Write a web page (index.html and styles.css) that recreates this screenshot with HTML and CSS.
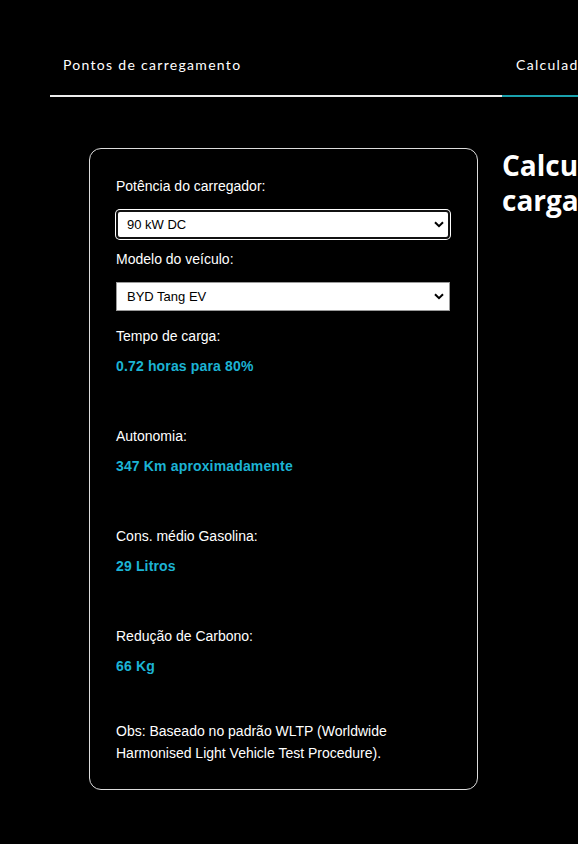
FILE: index.html
```html
<!DOCTYPE html>
<html lang="pt-BR">
<head>
<meta charset="utf-8">
<title>Calculadora de carga</title>
<link rel="stylesheet" href="styles.css">
</head>
<body>
<div class="page">
  <nav class="tabs">
    <a class="tab tab-inactive" href="#">Pontos de carregamento</a>
    <a class="tab tab-active" href="#">Calculadora de carga</a>
  </nav>
  <main class="main">
    <section class="card">
      <label class="label first" for="power">Potência do carregador:</label>
      <div class="select-wrap focused">
        <select id="power" class="select">
          <option>90 kW DC</option>
        </select>
        <svg class="chev" width="10" height="7" viewBox="0 0 10 7"><path d="M1 1.2 L5 5.2 L9 1.2" fill="none" stroke="#000" stroke-width="2"/></svg>
      </div>
      <label class="label" for="model">Modelo do veículo:</label>
      <div class="select-wrap">
        <select id="model" class="select">
          <option>BYD Tang EV</option>
        </select>
        <svg class="chev" width="10" height="7" viewBox="0 0 10 7"><path d="M1 1.2 L5 5.2 L9 1.2" fill="none" stroke="#000" stroke-width="2"/></svg>
      </div>
      <div class="result first-result">
        <div class="label">Tempo de carga:</div>
        <div class="value">0.72 horas para 80%</div>
      </div>
      <div class="result">
        <div class="label">Autonomia:</div>
        <div class="value">347 Km aproximadamente</div>
      </div>
      <div class="result">
        <div class="label">Cons. médio Gasolina:</div>
        <div class="value">29 Litros</div>
      </div>
      <div class="result">
        <div class="label">Redução de Carbono:</div>
        <div class="value">66 Kg</div>
      </div>
      <p class="obs">Obs: Baseado no padrão WLTP (Worldwide Harmonised Light Vehicle Test Procedure).</p>
    </section>
    <h1 class="title">Calculadora de tempo de carga</h1>
  </main>
</div>
</body>
</html>
```

FILE: styles.css
```css
html, body {
  margin: 0;
  padding: 0;
  background: #000;
  overflow-x: hidden;
}
body {
  color: #fff;
  font-family: "Liberation Sans", Arial, sans-serif;
}
.page {
  width: 1000px;
  padding-left: 50px;
  padding-bottom: 40px;
}
.tabs {
  display: flex;
}
.tab {
  display: block;
  width: 452px;
  box-sizing: border-box;
  padding: 55px 0 20px 13px;
  font-family: Lato, "Open Sans", sans-serif;
  font-size: 14px;
  line-height: 20px;
  letter-spacing: 1.3px;
  color: #fff;
  text-decoration: none;
  border-bottom: 2px solid #ececec;
}
.tab-active {
  padding-left: 14px;
  border-bottom-color: #1aa1ad;
}
.main {
  display: flex;
  align-items: flex-start;
  padding-top: 51px;
  padding-left: 39px;
  gap: 24px;
}
.card {
  width: 389px;
  flex: none;
  box-sizing: border-box;
  border: 1px solid #dcdcdc;
  border-radius: 12px;
  padding: 27px 27px 25px 26px;
  display: flex;
  flex-direction: column;
}
.label {
  display: block;
  font-size: 14px;
  line-height: 20px;
  color: #fff;
}
.card > .label + .select-wrap {
  margin-top: 13px;
}
.select-wrap + .label {
  margin-top: 10px;
}
.select-wrap {
  position: relative;
  height: 29px;
}
.select {
  appearance: none;
  -webkit-appearance: none;
  width: 100%;
  height: 29px;
  box-sizing: border-box;
  margin: 0;
  border: 1px solid #9a9a9a;
  border-radius: 0;
  background: #fff;
  color: #000;
  font-family: "Liberation Sans", Arial, sans-serif;
  font-size: 13px;
  padding: 0 0 0 10px;
  outline: none;
}
.focused {
  margin-top: 14px !important;
}
.focused .select {
  border: 2px solid #111;
  border-radius: 4px;
  box-shadow: 0 0 0 1px #fff;
  padding-left: 9px;
}
.chev {
  position: absolute;
  right: 6px;
  top: 11px;
  pointer-events: none;
}
.result + .result {
  margin-top: 50px;
}
.first-result {
  margin-top: 15px;
}
.value {
  margin-top: 10px;
  font-size: 14px;
  line-height: 20px;
  font-weight: bold;
  letter-spacing: 0.15px;
  color: #1cb3d4;
}
.obs {
  margin: 44px 0 0 0;
  font-size: 14px;
  line-height: 22px;
  color: #fff;
}
.title {
  margin: 0;
  width: 400px;
  font-family: "Open Sans", sans-serif;
  font-size: 28px;
  line-height: 35px;
  font-weight: 700;
  color: #fff;
}
```
